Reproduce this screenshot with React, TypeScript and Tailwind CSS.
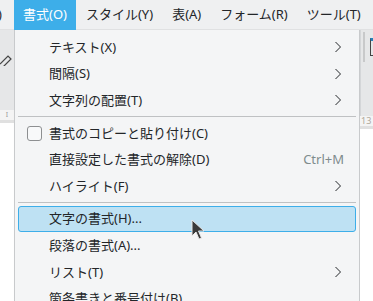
import React from "react";

const font = { fontFamily: '"Noto Sans", "Noto Sans CJK JP", sans-serif' };

type Item =
  | { kind: "sep" }
  | { kind: "item"; label: string; sub?: boolean; shortcut?: string; check?: boolean; active?: boolean };

const items: Item[] = [
  { kind: "item", label: "テキスト(X)", sub: true },
  { kind: "item", label: "間隔(S)", sub: true },
  { kind: "item", label: "文字列の配置(T)", sub: true },
  { kind: "sep" },
  { kind: "item", label: "書式のコピーと貼り付け(C)", check: true },
  { kind: "item", label: "直接設定した書式の解除(D)", shortcut: "Ctrl+M" },
  { kind: "item", label: "ハイライト(F)", sub: true },
  { kind: "sep" },
  { kind: "item", label: "文字の書式(H)...", active: true },
  { kind: "item", label: "段落の書式(A)...", sub: false },
  { kind: "item", label: "リスト(T)", sub: true },
  { kind: "item", label: "箇条書きと番号付け(B)..." },
];

const menus = ["書式(O)", "スタイル(Y)", "表(A)", "フォーム(R)", "ツール(T)"];

const Chevron = () => (
  <svg width="8" height="12" viewBox="0 0 8 12" className="text-[#232629]">
    <path d="M1.5 1 L6.5 6 L1.5 11" fill="none" stroke="currentColor" strokeWidth="1" />
  </svg>
);

export default function App() {
  return (
    <div className="relative w-[373px] h-[301px] overflow-hidden bg-white text-[13px] text-[#232629]" style={font}>
      {/* menubar */}
      <div className="relative flex h-[30px] items-center bg-[#eff0f1] pl-[14px] border-b border-[#e0e1e2] whitespace-nowrap">
        <span className="absolute left-[-2px] top-[5px]">)</span>
        {menus.map((m, i) => (
          <div
            key={m}
            className={
              i === 0
                ? "h-[30px] shrink-0 flex items-center px-[9px] bg-[#3daee9] text-white"
                : "h-[30px] shrink-0 flex items-center px-[9px] ml-[1px]"
            }
          >
            {m}
          </div>
        ))}
      </div>

      <div className="flex h-[271px]">
        {/* left document strip */}
        <div className="w-[14px] flex flex-col">
          <div className="h-[80px] bg-[#e6e7e8] relative">
            <svg width="14" height="14" viewBox="0 0 14 14" className="absolute left-[0px] top-[22px]">
              <path d="M0 12 L8 4 L11 7 L3 15" fill="none" stroke="#444" strokeWidth="1.2" />
            </svg>
          </div>
          <div className="h-[10px] bg-[#f4f4f4] flex items-center justify-center text-[7px] text-[#999]">I</div>
          <div className="h-[3px] bg-[#e0e0e0]" />
          <div className="flex-1 bg-white" />
        </div>

        {/* popup menu */}
        <div className="w-[346px] bg-[#f4f5f6] border-l border-[#a8aaac] border-r border-[#c8cacc] pt-[4px] px-[3px] shadow-[2px_0_3px_rgba(0,0,0,0.12)]">
          {items.map((it, i) =>
            it.kind === "sep" ? (
              <div key={i} className="h-[6px] flex items-center">
                <div className="h-px w-full bg-[#bfc1c3]" />
              </div>
            ) : (
              <div
                key={i}
                className={
                  "h-[26.6px] flex items-center pl-[30px] pr-[13px] rounded-[3px] border " +
                  (it.active ? "bg-[#bee1f3] border-[#3daee9]" : "border-transparent")
                }
              >
                {it.check && (
                  <span className="absolute ml-[-22px] w-[15px] h-[15px] rounded-[3px] border border-[#8d8f91] bg-[#f8f9fa]" />
                )}
                <span className="flex-1 leading-none">{it.label}</span>
                {it.shortcut && <span className="text-[#7f8c8d] mr-[-2px]">{it.shortcut}</span>}
                {it.sub && <Chevron />}
              </div>
            )
          )}
        </div>

        {/* right document strip */}
        <div className="flex-1 flex flex-col">
          <div className="h-[86px] bg-[#e6e7e8] relative border-l border-[#d4d6d8]">
            <div className="absolute left-[2px] top-[2px] w-[2px] h-[30px] bg-[#c8c9ca]" />
            <div className="absolute left-[9px] top-[8px] w-[8px] h-[18px] border border-[#444] border-t-[3px] border-t-[#2980b9]" />
          </div>
          <div className="h-[10px] bg-[#f4f4f4] text-[9px] leading-[10px] text-[#b0a89a] pl-[1px]">13</div>
          <div className="h-[3px] bg-[#e0e0e0]" />
          <div className="flex-1 bg-white" />
        </div>
      </div>

      {/* mouse pointer */}
      <svg width="14" height="22" viewBox="0 0 14 22" className="absolute left-[191px] top-[219px]">
        <path d="M1 1 L1 17 L5 13 L8 20 L10.5 19 L7.5 12 L13 12 Z" fill="#3a3a3a" stroke="#e8e8e8" strokeWidth="1" />
      </svg>
    </div>
  );
}
